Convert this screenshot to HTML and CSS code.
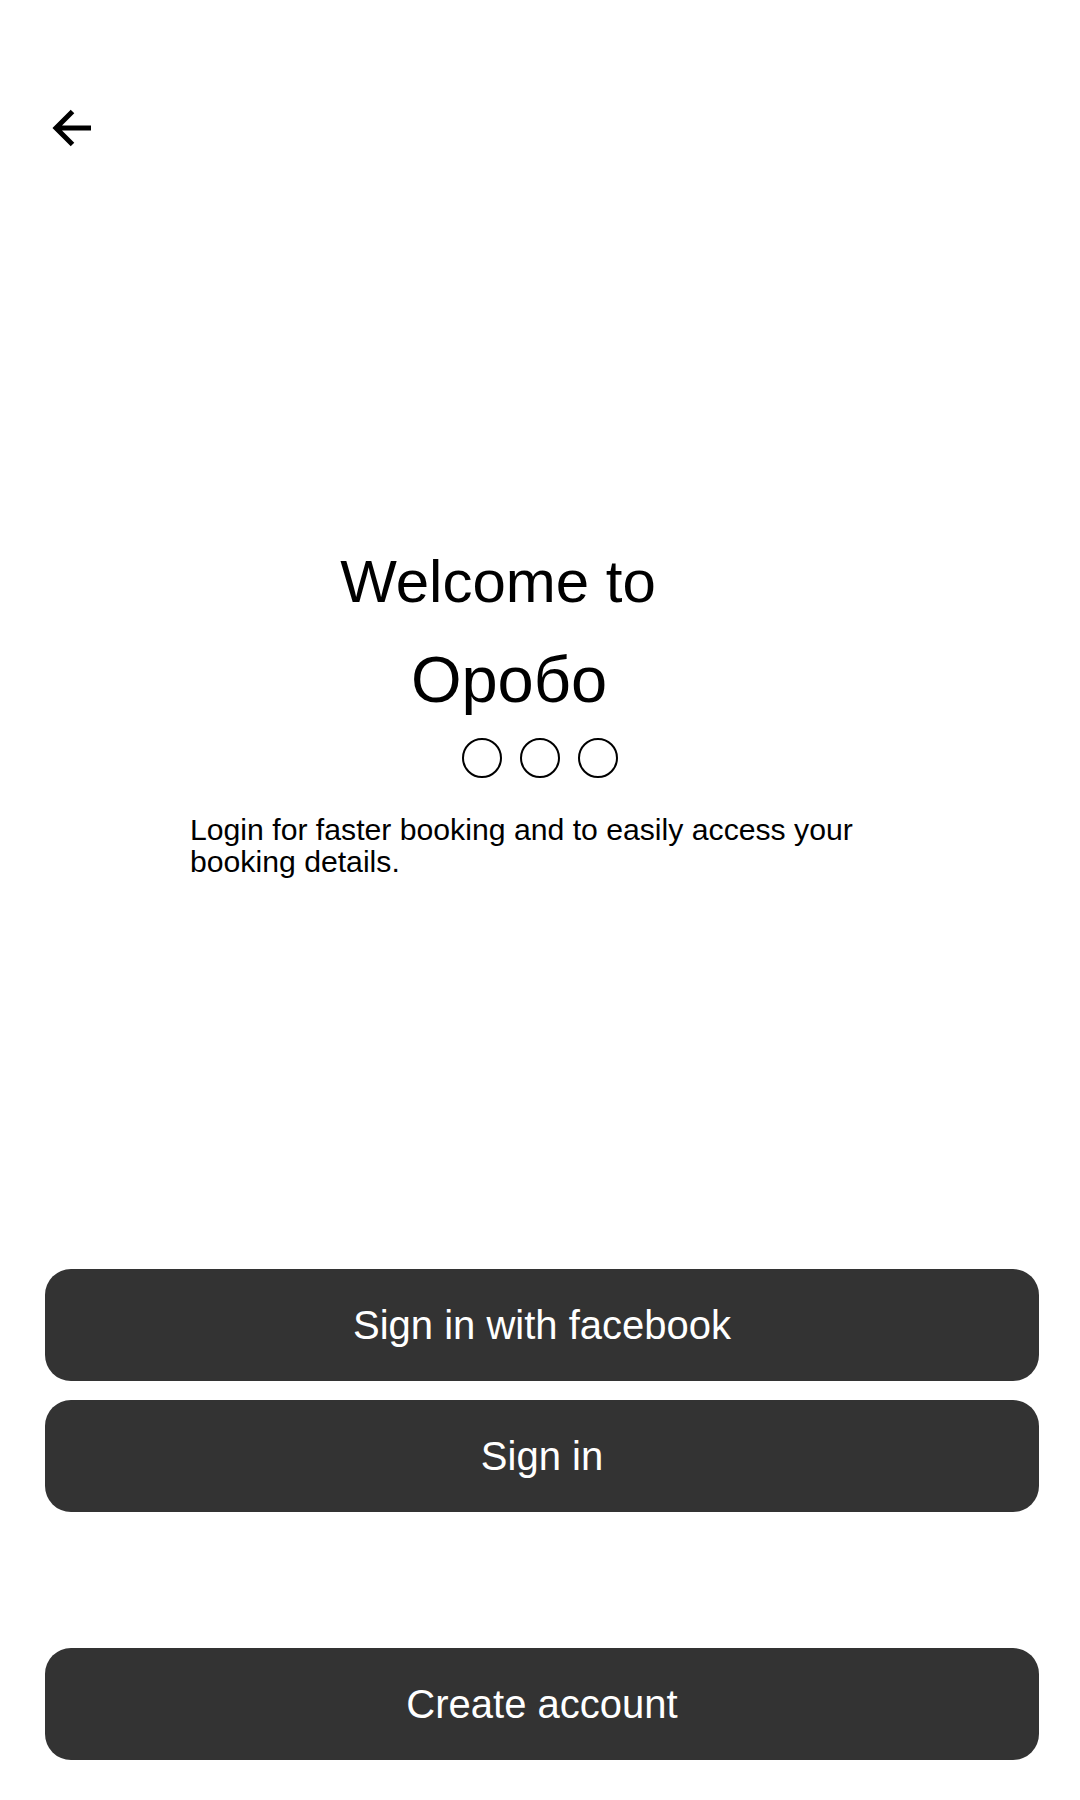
FILE: index.html
```html
<!DOCTYPE html>
<html lang="en">
<head>
<meta charset="utf-8">
<title>Welcome to Оробо</title>
<link rel="stylesheet" href="styles.css">
</head>
<body>
<div class="page">
  <header class="topbar">
    <button class="back" aria-label="Back">
      <svg width="48" height="48" viewBox="0 0 48 48" aria-hidden="true">
        <path d="M7.5 24 H43 M24.5 7.5 L8 24 L24.5 40.5" fill="none" stroke="#000" stroke-width="5" stroke-linecap="butt" stroke-linejoin="miter"/>
      </svg>
    </button>
  </header>
  <main class="hero">
    <h1 class="title">Welcome to</h1>
    <div class="brand">Оробо</div>
    <div class="dots">
      <span class="dot"></span>
      <span class="dot"></span>
      <span class="dot"></span>
    </div>
    <p class="desc">Login for faster booking and to easily access your booking details.</p>
  </main>
  <div class="actions">
    <button class="btn btn-fb">Sign in with facebook</button>
    <button class="btn btn-signin">Sign in</button>
    <button class="btn btn-create">Create account</button>
  </div>
</div>
</body>
</html>
```
FILE: styles.css
```css
* { box-sizing: border-box; }
html, body { margin: 0; padding: 0; background: #ffffff; }
body {
  font-family: "Liberation Sans", Arial, sans-serif;
  color: #000000;
  width: 1080px;
}
.page {
  display: flex;
  flex-direction: column;
  min-height: 1800px;
}
.topbar {
  padding: 104px 0 0 48px;
  height: 152px;
}
.back {
  display: block;
  width: 48px;
  height: 48px;
  padding: 0;
  margin: 0;
  border: 0;
  background: transparent;
}
.back svg { display: block; }
.hero {
  margin-top: 395px;
  display: flex;
  flex-direction: column;
}
.title {
  margin: 0;
  font-weight: 400;
  font-size: 60px;
  line-height: 70px;
  text-align: center;
  padding-right: 84px;
}
.brand {
  margin-top: 28px;
  font-size: 65px;
  line-height: 70px;
  text-align: center;
  padding-right: 62px;
}
.dots {
  margin-top: 23px;
  display: flex;
  justify-content: center;
  gap: 18px;
  height: 40px;
}
.dot {
  width: 40px;
  height: 40px;
  border: 2.2px solid #000;
  border-radius: 50%;
}
.desc {
  margin: 36px auto 0;
  width: 700px;
  font-size: 30.2px;
  line-height: 32px;
  text-align: left;
}
.actions {
  margin-top: 391px;
  padding: 0 41px 0 45px;
  display: flex;
  flex-direction: column;
}
.btn {
  display: block;
  width: 100%;
  height: 112px;
  border: 0;
  border-radius: 26px;
  background: #333333;
  color: #ffffff;
  font-family: "Liberation Sans", Arial, sans-serif;
  font-size: 40px;
  line-height: 112px;
  padding: 0;
  text-align: center;
}
.btn-signin { margin-top: 19px; }
.btn-create { margin-top: 136px; }
```
